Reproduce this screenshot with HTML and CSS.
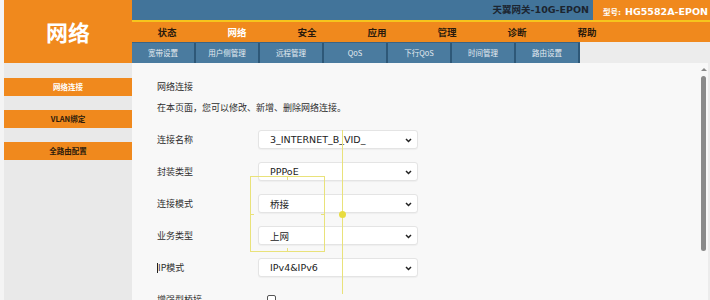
FILE: index.html
```html
<!DOCTYPE html>
<html lang="zh">
<head>
<meta charset="utf-8">
<link rel="stylesheet" href="styles.css">
</head>
<body>
<div class="page">
  <div class="brand">网络</div>
  <div class="head">
    <div class="topbar">
      <div class="device">天翼网关-10G-EPON</div>
      <div class="model"><span class="model-label">型号:</span><span class="model-name">HG5582A-EPON</span></div>
    </div>
    <div class="rule"></div>
    <nav class="menu">
      <span class="menu-item">状态</span>
      <span class="menu-item active">网络</span>
      <span class="menu-item">安全</span>
      <span class="menu-item">应用</span>
      <span class="menu-item">管理</span>
      <span class="menu-item">诊断</span>
      <span class="menu-item">帮助</span>
    </nav>
    <div class="subnav">
      <div class="tabs">
        <span class="tab">宽带设置</span>
        <span class="tab">用户侧管理</span>
        <span class="tab">远程管理</span>
        <span class="tab">QoS</span>
        <span class="tab">下行QoS</span>
        <span class="tab">时间管理</span>
        <span class="tab">路由设置</span>
      </div>
    </div>
  </div>
  <aside class="sidebar">
    <div class="side-btn current">网络连接</div>
    <div class="side-btn">VLAN绑定</div>
    <div class="side-btn">全路由配置</div>
  </aside>
  <section class="content">
    <div class="main">
      <div class="title">网络连接</div>
      <div class="desc">在本页面，您可以修改、新增、删除网络连接。</div>
      <div class="form">
        <div class="row"><span class="label">连接名称</span><div class="select">3_INTERNET_B_VID_<svg class="chev" viewBox="0 0 8 6" width="7" height="5"><path d="M1 1.2 L4 4.2 L7 1.2" fill="none" stroke="#222" stroke-width="1.8"/></svg></div></div>
        <div class="row"><span class="label">封装类型</span><div class="select">PPPoE<svg class="chev" viewBox="0 0 8 6" width="7" height="5"><path d="M1 1.2 L4 4.2 L7 1.2" fill="none" stroke="#222" stroke-width="1.8"/></svg></div></div>
        <div class="row"><span class="label">连接模式</span><div class="select">桥接<svg class="chev" viewBox="0 0 8 6" width="7" height="5"><path d="M1 1.2 L4 4.2 L7 1.2" fill="none" stroke="#222" stroke-width="1.8"/></svg></div></div>
        <div class="row"><span class="label">业务类型</span><div class="select">上网<svg class="chev" viewBox="0 0 8 6" width="7" height="5"><path d="M1 1.2 L4 4.2 L7 1.2" fill="none" stroke="#222" stroke-width="1.8"/></svg></div></div>
        <div class="row"><span class="label"><span class="caret"></span>IP模式</span><div class="select">IPv4&amp;IPv6<svg class="chev" viewBox="0 0 8 6" width="7" height="5"><path d="M1 1.2 L4 4.2 L7 1.2" fill="none" stroke="#222" stroke-width="1.8"/></svg></div></div>
        <div class="row"><span class="label">增强型桥接</span><span class="checkbox"></span></div>
      </div>
    </div>
    <div class="scrollbar">
      <div class="arrow"></div>
      <div class="thumb"></div>
    </div>
    <div class="overlay-rect">
      <span class="tick t-top"></span><span class="tick t-bottom"></span><span class="tick t-left"></span><span class="tick t-right"></span>
    </div>
    <div class="overlay-line"></div>
    <div class="overlay-dot"></div>
  </section>
</div>
</body>
</html>
```
FILE: styles.css
```css
* { box-sizing: border-box; }
html, body { margin: 0; padding: 0; }
body {
  background: #f4f4f4;
  width: 710px;
  height: 300px;
  overflow: hidden;
  font-family: "Noto Sans CJK SC", "DejaVu Sans", sans-serif;
  color: #333;
}
.page {
  display: grid;
  grid-template-columns: 128px 1fr;
  grid-template-rows: 63px 237px;
  padding-left: 4px;
}
.brand {
  background: #f0891d;
  color: #fff;
  font-size: 22px;
  font-weight: bold;
  display: flex;
  align-items: center;
  justify-content: center;
  padding-bottom: 2px;
}
.head { display: flex; flex-direction: column; }
.topbar {
  height: 20px;
  display: flex;
  background: #42749a;
}
.device {
  flex: 1;
  text-align: right;
  padding-right: 4px;
  font-family: "DejaVu Sans", "Noto Sans CJK SC", sans-serif;
  font-size: 9.5px;
  font-weight: bold;
  color: #1c2530;
  line-height: 20px;
}
.model {
  width: 117px;
  background: #f0891d;
  color: #fff;
  line-height: 20px;
  padding-left: 10px;
  white-space: nowrap;
  font-family: "DejaVu Sans", "Noto Sans CJK SC", sans-serif;
  font-weight: bold;
}
.model-label { font-size: 7.5px; margin-right: 4px; }
.model-name { font-size: 9.5px; }
.rule { height: 2px; background: #f6c51d; }
.menu {
  height: 20px;
  background: #f0891d;
  display: flex;
}
.menu-item {
  width: 70px;
  text-align: center;
  font-size: 9.5px;
  font-weight: bold;
  color: #2a1a0c;
  line-height: 20px;
}
.menu-item.active { color: #fff; }
.subnav {
  height: 21px;
  background: #ececec;
  display: flex;
}
.tabs {
  display: flex;
  background: #4a7b9f;
  border-top: 1px solid #3a6485;
}
.tab {
  width: 64px;
  border-right: 2px solid #2e5878;
  text-align: center;
  color: #e4ebf1;
  font-size: 7.5px;
  line-height: 19px;
}
.sidebar {
  background: #e9e9e9;
  padding-top: 15px;
  display: flex;
  flex-direction: column;
  gap: 14px;
}
.side-btn {
  height: 18px;
  background: #f0891d;
  text-align: center;
  font-size: 7.5px;
  font-weight: bold;
  line-height: 18px;
  color: #2a1a0c;
}
.side-btn.current { color: #fff; }
.content {
  position: relative;
  background: #f8f8f8;
  display: flex;
  overflow: hidden;
}
.main {
  flex: 1;
  padding: 17px 0 0 25px;
}
.title { font-size: 9px; line-height: 14px; color: #2e2e2e; }
.desc { margin-top: 7px; font-size: 9px; line-height: 14px; color: #2e2e2e; }
.form {
  margin-top: 15px;
  display: flex;
  flex-direction: column;
  gap: 13px;
}
.row { display: flex; align-items: center; height: 19px; }
.label { width: 101px; font-size: 9px; color: #2e2e2e; display: flex; align-items: center; }
.caret { width: 1px; height: 10px; background: #222; }
.select {
  width: 160px;
  height: 19px;
  background: #fff;
  border: 1px solid #e4e4e4;
  border-radius: 3px;
  box-shadow: 0 1px 1px rgba(0,0,0,0.04);
  display: flex;
  align-items: center;
  padding-left: 11px;
  font-family: "DejaVu Sans", "Noto Sans CJK SC", sans-serif;
  font-size: 9.5px;
  color: #222;
  position: relative;
}
.chev { position: absolute; right: 5px; top: 7px; }
.checkbox {
  align-self: flex-start;
  margin-top: 5px;
  margin-left: 9px;
  width: 9px;
  height: 9px;
  border: 1px solid #555;
  border-radius: 2px;
  background: #fff;
}
.scrollbar {
  width: 12px;
  padding-top: 5px;
  display: flex;
  flex-direction: column;
  align-items: flex-start;
  padding-left: 3px;
  background: #f8f8f8;
  border-right: 2px solid #ececec;
}
.arrow {
  width: 0; height: 0;
  border-left: 3px solid transparent;
  border-right: 3px solid transparent;
  border-bottom: 3px solid #888;
}
.thumb {
  margin-top: 5px;
  width: 5px;
  height: 175px;
  background: #8a8a8a;
  border-radius: 3px;
}
.overlay-rect {
  position: absolute;
  left: 118px;
  top: 113px;
  width: 75px;
  height: 76px;
  border: 1px solid #e9e27a;
}
.tick { position: absolute; background: #e9e27a; }
.t-top { left: 36px; top: 0; width: 1px; height: 3px; }
.t-bottom { left: 36px; bottom: 0; width: 1px; height: 3px; }
.t-left { top: 37px; left: 0; width: 3px; height: 1px; }
.t-right { top: 37px; right: 0; width: 3px; height: 1px; }
.overlay-line {
  position: absolute;
  left: 210px;
  top: 67px;
  width: 1px;
  height: 164px;
  background: #e9e27a;
}
.overlay-dot {
  position: absolute;
  left: 207px;
  top: 148px;
  width: 7px;
  height: 7px;
  border-radius: 50%;
  background: #e8dc40;
}
```
